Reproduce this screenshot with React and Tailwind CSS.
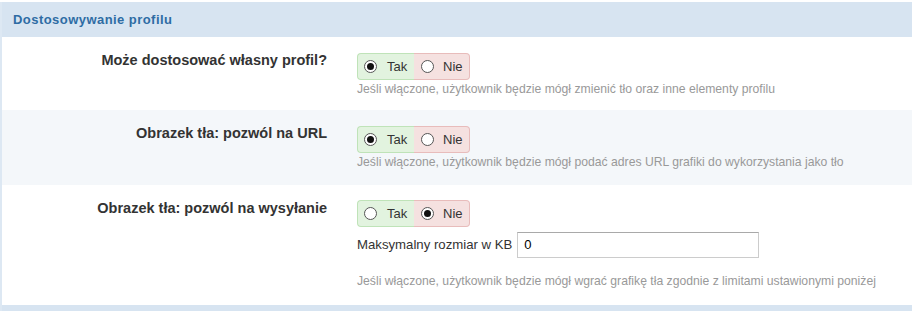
import React from "react";

function Radio({ checked }) {
  return (
    <span className="inline-flex items-center justify-center w-[13px] h-[13px] rounded-full border border-[#555] bg-white">
      {checked && <span className="block w-[7px] h-[7px] rounded-full bg-[#111]" />}
    </span>
  );
}

function Toggle({ yes }) {
  return (
    <div className="inline-flex h-[27px] text-[13px] text-[#333]">
      <div className="flex items-center gap-[10px] w-[57px] pl-[6px] bg-[#e2f3df] border border-[#bfe3b8] border-r-0 rounded-l-[4px]">
        <Radio checked={yes} />
        <span>Tak</span>
      </div>
      <div className="flex items-center gap-[9px] w-[56px] pl-[7px] bg-[#f5e1e0] border border-[#e8bcbb] border-l-0 rounded-r-[4px]">
        <Radio checked={!yes} />
        <span>Nie</span>
      </div>
    </div>
  );
}

function Row({ label, children, bg }) {
  return (
    <div className={`flex ${bg}`}>
      <div className="w-[325px] shrink-0 text-right font-bold text-[14.5px] text-[#333] pt-[15px] leading-[17px]">
        {label}
      </div>
      <div className="ml-[30px] flex flex-col items-start">{children}</div>
    </div>
  );
}

export default function App() {
  return (
    <div className="w-[912px] h-[311px] bg-white pt-[2px] overflow-hidden" style={{ fontFamily: '"Liberation Sans", Arial, sans-serif' }}>
      <div className="border-l-2 border-[#dde8f3] h-full flex flex-col">
        <div className="h-[35px] shrink-0 bg-[#d7e4f1] flex items-center pl-[11px] text-[13px] tracking-[0.45px] font-bold text-[#2e6ca4]">
          Dostosowywanie profilu
        </div>
        <Row label="Może dostosować własny profil?" bg="bg-white">
          <div className="pt-[16px] pb-[12px] flex flex-col items-start">
            <Toggle yes={true} />
            <div className="mt-[1px] text-[12.2px] leading-[17px] text-[#999]">
              Jeśli włączone, użytkownik będzie mógł zmienić tło oraz inne elementy profilu
            </div>
          </div>
        </Row>
        <Row label="Obrazek tła: pozwól na URL" bg="bg-[#f4f7fa]">
          <div className="pt-[16px] pb-[14px] flex flex-col items-start">
            <Toggle yes={true} />
            <div className="mt-[1px] text-[12.2px] leading-[17px] text-[#999]">
              Jeśli włączone, użytkownik będzie mógł podać adres URL grafiki do wykorzystania jako tło
            </div>
          </div>
        </Row>
        <Row label="Obrazek tła: pozwól na wysyłanie" bg="bg-white">
          <div className="pt-[15px] flex flex-col items-start h-[120px]">
            <Toggle yes={false} />
            <div className="mt-[5px] flex items-center text-[13.2px] text-[#333]">
              <span>Maksymalny rozmiar w KB</span>
              <div className="ml-[5px] w-[242px] h-[26px] border border-[#ccc] border-t-[#a9a9a9] bg-white flex items-center pl-[6px] text-[13px] text-black">
                0
              </div>
            </div>
            <div className="mt-[15px] text-[12.2px] leading-[17px] text-[#999]">
              Jeśli włączone, użytkownik będzie mógł wgrać grafikę tła zgodnie z limitami ustawionymi poniżej
            </div>
          </div>
        </Row>
        <div className="flex-1 bg-[#d7e4f1]" />
      </div>
    </div>
  );
}
